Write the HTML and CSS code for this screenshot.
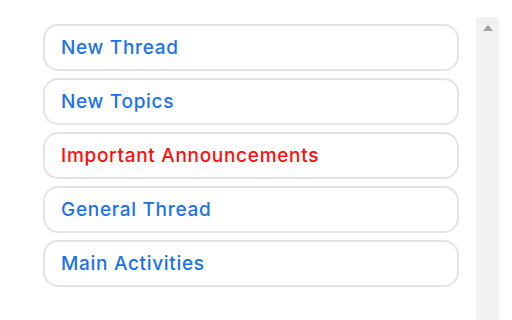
FILE: index.html
```html
<!DOCTYPE html>
<html>
<head>
<meta charset="utf-8">
<link rel="stylesheet" href="styles.css">
</head>
<body>
<div class="page">
  <ul class="threads">
    <li class="thread">New Thread</li>
    <li class="thread">New Topics</li>
    <li class="thread important">Important Announcements</li>
    <li class="thread">General Thread</li>
    <li class="thread">Main Activities</li>
  </ul>
  <div class="scrollbar">
    <span class="arrow"></span>
  </div>
</div>
</body>
</html>
```
FILE: styles.css
```css
html, body {
  margin: 0;
  padding: 0;
  background: #ffffff;
}
.page {
  display: flex;
  align-items: flex-start;
  height: 320px;
  overflow: hidden;
}
.threads {
  list-style: none;
  margin: 24px 0 0 43px;
  padding: 0;
  width: 416px;
  display: flex;
  flex-direction: column;
  gap: 7px;
}
.thread {
  box-sizing: border-box;
  height: 47px;
  border: 2px solid #e4e4e6;
  border-radius: 15px;
  padding: 0 16px;
  display: flex;
  align-items: center;
  font-family: Inter, "Open Sans", sans-serif;
  font-weight: 500;
  font-size: 19px;
  letter-spacing: 0.7px;
  color: #1a73e8;
}
.thread.important {
  color: #ff0d0d;
}
.scrollbar {
  margin: 17px 0 0 17px;
  width: 23px;
  height: 303px;
  background: #f1f1f1;
  display: flex;
  justify-content: center;
  padding-top: 8px;
  box-sizing: border-box;
}
.arrow {
  width: 0;
  height: 0;
  border-left: 5px solid transparent;
  border-right: 5px solid transparent;
  border-bottom: 6px solid #a3a3a3;
}
```
